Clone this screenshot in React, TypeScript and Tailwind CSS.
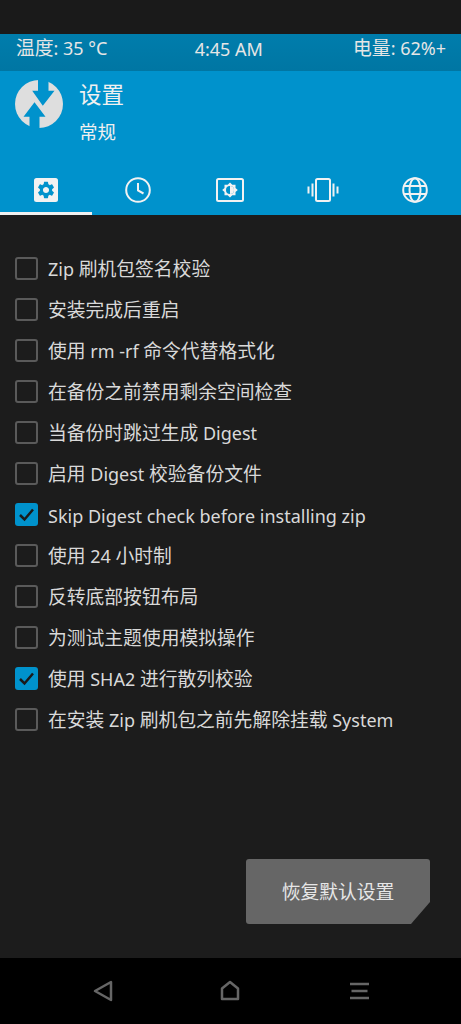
const settings = [
  { label: "Zip 刷机包签名校验" },
  { label: "安装完成后重启" },
  { label: "使用 rm -rf 命令代替格式化" },
  { label: "在备份之前禁用剩余空间检查" },
  { label: "当备份时跳过生成 Digest" },
  { label: "启用 Digest 校验备份文件" },
  { label: "Skip Digest check before installing zip", checked: true },
  { label: "使用 24 小时制" },
  { label: "反转底部按钮布局" },
  { label: "为测试主题使用模拟操作" },
  { label: "使用 SHA2 进行散列校验", checked: true },
  { label: "在安装 Zip 刷机包之前先解除挂载 System" },
];

const gearPath =
  "M19.14 12.94c.04-.3.06-.61.06-.94 0-.32-.02-.64-.07-.94l2.03-1.58a.49.49 0 0 0 .12-.61l-1.92-3.32a.488.488 0 0 0-.59-.22l-2.39.96c-.5-.38-1.03-.7-1.62-.94l-.36-2.54a.484.484 0 0 0-.48-.41h-3.84c-.24 0-.43.17-.47.41l-.36 2.54c-.59.24-1.13.57-1.62.94l-2.39-.96c-.22-.08-.47 0-.59.22L2.74 8.87c-.12.21-.08.47.12.61l2.03 1.58c-.05.3-.09.63-.09.94s.02.64.07.94l-2.03 1.58a.49.49 0 0 0-.12.61l1.92 3.32c.12.22.37.29.59.22l2.39-.96c.5.38 1.03.7 1.62.94l.36 2.54c.05.24.24.41.48.41h3.84c.24 0 .44-.17.47-.41l.36-2.54c.59-.24 1.13-.56 1.62-.94l2.39.96c.22.08.47 0 .59-.22l1.92-3.32c.12-.22.07-.47-.12-.61l-2.01-1.58zM12 15.6c-1.98 0-3.6-1.62-3.6-3.6s1.62-3.6 3.6-3.6 3.6 1.62 3.6 3.6-1.62 3.6-3.6 3.6z";

// the Latin runs sit a little smaller than the Chinese ones in the reference
function Mixed({ text }: { text: string }) {
  const parts = text.split(/([\u4e00-\u9fff]+)/).filter(Boolean);
  return (
    <>
      {parts.map((part, i) =>
        /[\u4e00-\u9fff]/.test(part) ? (
          <span key={i} className="text-[18.800px]">
            {part}
          </span>
        ) : (
          <span key={i} className="text-[18px]">
            {part}
          </span>
        )
      )}
    </>
  );
}

function TwrpLogo() {
  return (
    <svg width="48" height="48" viewBox="0 0 48 48">
      <circle cx="24" cy="24" r="24" fill="#dedede" />
      <path d="M23 0h10.500v10.700h6L27.800 25.700 17.200 10.700H23z" fill="#0092cc" />
      <path d="M19.500 22.300l11 14.400h-6V48h-10V36.700h-6z" fill="#0092cc" />
    </svg>
  );
}

function GearTab() {
  return (
    <svg width="24" height="24" viewBox="0 0 24 24">
      <rect width="24" height="24" rx="2.500" fill="#f2f2f2" />
      <path d={gearPath} transform="translate(1.800 1.800) scale(0.85)" fill="#0092cc" />
    </svg>
  );
}

function ClockTab() {
  return (
    <svg width="26" height="26" viewBox="0 0 26 26" fill="none" stroke="#f2f2f2" strokeWidth="2">
      <circle cx="13" cy="13" r="11.800" />
      <path d="M13 6v7.500l5.500 3" />
    </svg>
  );
}

function ScreenTab() {
  return (
    <svg width="28" height="24" viewBox="0 0 28 24" fill="none">
      <rect x="1" y="1" width="26" height="22" rx="1.500" stroke="#f2f2f2" strokeWidth="2" />
      <path
        d="M14 4.500l2.300 2.300h3.200V10l2.300 2-2.300 2v3.200h-3.200L14 19.500l-2.300-2.300H8.500V14l-2.300-2 2.300-2V6.800h3.200z"
        fill="#f2f2f2"
      />
      <circle cx="14" cy="12" r="4" fill="#0092cc" />
      <path d="M14 8a4 4 0 0 1 0 8z" fill="#f2f2f2" />
    </svg>
  );
}

function VibrateTab() {
  return (
    <svg width="32" height="24" viewBox="0 0 32 24" fill="none" stroke="#f2f2f2" strokeWidth="2">
      <rect x="9" y="1" width="14" height="22" rx="1.500" />
      <path d="M5.500 5.500v13M26.500 5.500v13" />
      <path d="M1.500 8.500v7M30.500 8.500v7" />
    </svg>
  );
}

function GlobeTab() {
  return (
    <svg width="26" height="26" viewBox="0 0 26 26" fill="none" stroke="#f2f2f2" strokeWidth="2">
      <circle cx="13" cy="13" r="11.800" />
      <ellipse cx="13" cy="13" rx="5.500" ry="11.800" />
      <path d="M2 9h22M2 17h22" />
    </svg>
  );
}

function Checkbox({ checked }: { checked?: boolean }) {
  if (checked) {
    return (
      <div className="w-[23px] h-[23px] shrink-0 rounded-[3px] bg-[#0092cc] flex items-center justify-center">
        <svg width="17" height="17" viewBox="0 0 17 17" fill="none" stroke="#1a1a1a" strokeWidth="2.500">
          <path d="M2 9l4.500 4.500 8.500-10" />
        </svg>
      </div>
    );
  }
  return <div className="w-[23px] h-[23px] shrink-0 rounded-[3px] border-[2.500px] border-[#5a5a5a]" />;
}

export default function App() {
  const tabs = [GearTab, ClockTab, ScreenTab, VibrateTab, GlobeTab];
  return (
    <div className="w-[461px] h-[1024px] flex flex-col bg-[#1c1c1c] overflow-hidden font-['Noto_Sans','Noto_Sans_CJK_SC',sans-serif]">
      <div className="h-[34px] bg-[#1a1a1a]" />

      <div className="h-[37px] pl-4 pr-[15px] pb-[8px] flex items-center justify-between bg-gradient-to-b from-[#007dac] to-[#0076a3] text-[#e6e6e6] leading-none">
        <span>
          <Mixed text="温度: 35 °C" />
        </span>
        <span className="mr-[3px]">
          <Mixed text="4:45 AM" />
        </span>
        <span>
          <Mixed text="电量: 62%+" />
        </span>
      </div>

      <div className="h-[144px] flex flex-col bg-[#0092cc] text-[#f0f0f0]">
        <div className="h-[97px] pl-[15px] pt-[9px] flex gap-[16px]">
          <TwrpLogo />
          <div className="flex flex-col">
            <span className="text-[22.500px] leading-[30px]">设置</span>
            <span className="text-[18.500px] leading-[24px] mt-[10px]">常规</span>
          </div>
        </div>
        <div className="flex-1 grid grid-cols-5">
          {tabs.map((Icon, i) => (
            <div
              key={i}
              className={
                i === 0
                  ? "flex items-center justify-center border-b-[3px] border-[#f0f0f0]"
                  : "flex items-center justify-center pb-[3px]"
              }
            >
              <Icon />
            </div>
          ))}
        </div>
      </div>

      <div className="flex-1 flex flex-col px-[15px] pt-[33px]">
        {settings.map((item) => (
          <div key={item.label} className="h-[41px] flex items-center gap-[10px]">
            <Checkbox checked={item.checked} />
            <span className="mt-[2px] text-[#d9d9d9] leading-none">
              <Mixed text={item.label} />
            </span>
          </div>
        ))}
        <div className="flex-1 flex items-end justify-end pr-4 pb-[34px]">
          <div className="w-[184px] h-[65px] pt-[2px] rounded-[3px] bg-[#666666] flex items-center justify-center text-[18.800px] text-[#e6e6e6] [clip-path:polygon(0_0,100%_0,100%_43px,calc(100%-19px)_100%,0_100%)]">
            恢复默认设置
          </div>
        </div>
      </div>

      <div className="h-[66px] bg-black flex items-center justify-center pb-[1px]">
        <div className="w-[276px] flex items-center justify-between">
          <svg width="20" height="22" viewBox="0 0 20 22" fill="none" stroke="#666666" strokeWidth="2.500" strokeLinejoin="round">
            <path d="M18 2v18L2 11z" />
          </svg>
          <svg width="20" height="21" viewBox="0 0 20 21" fill="none" stroke="#666666" strokeWidth="2.500" strokeLinejoin="round" className="-ml-[2px]">
            <path d="M2 19V8.500L10 2l8 6.500V19z" />
          </svg>
          <svg width="19" height="18" viewBox="0 0 19 18" fill="none" stroke="#666666" strokeWidth="2.500">
            <path d="M0 2h19M1.500 9h16M0 16h19" />
          </svg>
        </div>
      </div>
    </div>
  );
}
